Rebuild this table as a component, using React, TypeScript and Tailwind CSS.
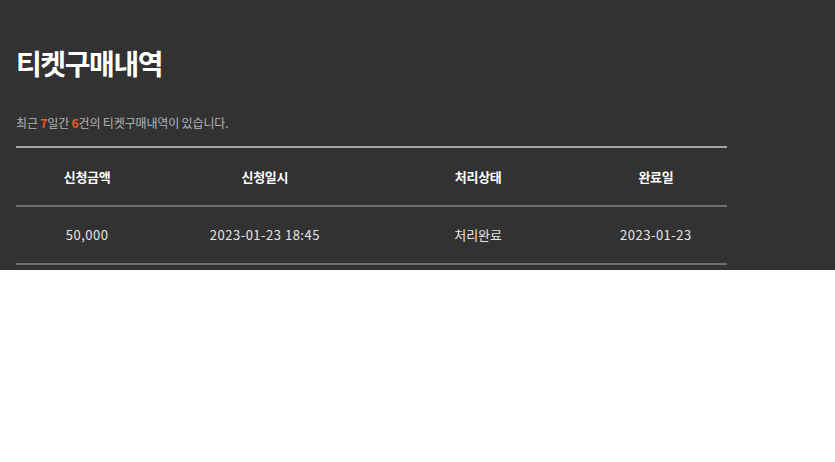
import React from "react";

const font = { fontFamily: '"Noto Sans CJK KR", "Noto Sans", sans-serif' };

export default function App() {
  return (
    <div className="w-full bg-white min-h-[462px]" style={font}>
      <div className="bg-[#323232] h-[270px] px-4 pt-[43px]">
        <h1 className="text-[28px] leading-[40px] font-bold text-white tracking-[-1.4px]">티켓구매내역</h1>
        <p className="mt-[31px] text-[12px] leading-[18px] text-[#b4b4b4] tracking-[-0.15px]">
          최근 <span className="text-[#ef5a24] font-bold">7</span>일간{" "}
          <span className="text-[#ef5a24] font-bold">6</span>건의 티켓구매내역이 있습니다.
        </p>
        <table className="mt-[14px] w-[711px] border-t-2 border-[#a5a5a5] table-fixed border-collapse">
          <colgroup>
            <col className="w-[20%]" />
            <col className="w-[30%]" />
            <col className="w-[30%]" />
            <col className="w-[20%]" />
          </colgroup>
          <thead>
            <tr className="h-[59px] border-b-2 border-[#6e6e6e]">
              {["신청금액", "신청일시", "처리상태", "완료일"].map((h) => (
                <th key={h} className="text-[13px] font-bold text-white text-center tracking-[-0.3px]">
                  {h}
                </th>
              ))}
            </tr>
          </thead>
          <tbody>
            <tr className="h-[58px] border-b-2 border-[#6e6e6e]">
              {["50,000", "2023-01-23 18:45", "처리완료", "2023-01-23"].map((c) => (
                <td
                  key={c}
                  className={
                    "text-[13px] text-[#e6e6e6] text-center " +
                    (c === "처리완료" ? "" : "tracking-[0.5px]")
                  }
                >
                  {c}
                </td>
              ))}
            </tr>
          </tbody>
        </table>
      </div>
    </div>
  );
}
